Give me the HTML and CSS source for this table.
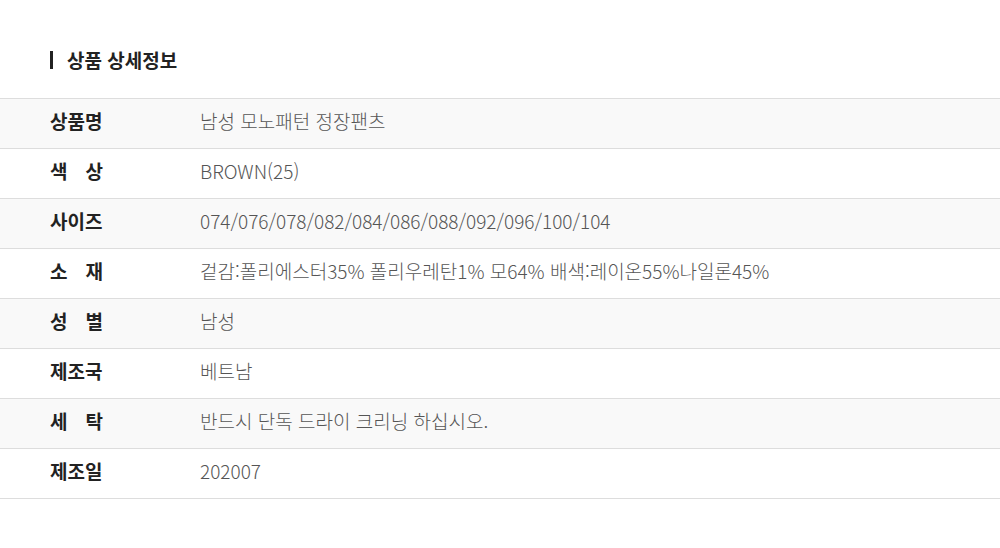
FILE: index.html
```html
<!DOCTYPE html>
<html lang="ko">
<head>
    <meta charset="UTF-8">
    <title>상품 상세정보</title>
    <link rel="stylesheet" href="styles.css">
</head>
<body>
    <div class="detail">
        <h2 class="detail-title">상품 상세정보</h2>
        <table class="info-table">
            <tr><th><span>상품명</span></th><td>남성 모노패턴 정장팬츠</td></tr>
            <tr><th><span>색 상</span></th><td>BROWN(25)</td></tr>
            <tr><th><span>사이즈</span></th><td>074/076/078/082/084/086/088/092/096/100/104</td></tr>
            <tr><th><span>소 재</span></th><td>겉감:폴리에스터35% 폴리우레탄1% 모64% 배색:레이온55%나일론45%</td></tr>
            <tr><th><span>성 별</span></th><td>남성</td></tr>
            <tr><th><span>제조국</span></th><td>베트남</td></tr>
            <tr><th><span>세 탁</span></th><td>반드시 단독 드라이 크리닝 하십시오.</td></tr>
            <tr><th><span>제조일</span></th><td>202007</td></tr>
        </table>
    </div>
</body>
</html>
```

FILE: styles.css
```css
* {
    box-sizing: border-box;
    margin: 0;
    padding: 0;
}
body {
    font-family: "Noto Sans CJK KR", "Noto Sans", sans-serif;
    background: #fff;
    color: #222;
}
.detail {
    padding-top: 46px;
}
.detail-title {
    display: flex;
    align-items: center;
    margin-left: 50px;
    margin-bottom: 25px;
    font-size: 19px;
    font-weight: bold;
    line-height: 27px;
    color: #222;
}
.detail-title::before {
    content: "";
    width: 3px;
    height: 18px;
    background: #222;
    margin-right: 14px;
}
.info-table {
    width: 100%;
    border-collapse: collapse;
    border-top: 1px solid #ddd;
}
.info-table tr {
    height: 50px;
    border-bottom: 1px solid #ddd;
}
.info-table tr:nth-child(odd) {
    background: #f9f9f9;
}
.info-table th,
.info-table td {
    padding-bottom: 5px;
    font-size: 19px;
    line-height: 24px;
    white-space: nowrap;
}
.info-table th {
    width: 200px;
    padding-left: 50px;
    text-align: left;
    font-weight: bold;
    color: #222;
}
.info-table th span {
    display: inline-block;
    width: 53px;
    text-align: justify;
    text-align-last: justify;
}
.info-table td {
    font-weight: 300;
    color: #555;
}
```
